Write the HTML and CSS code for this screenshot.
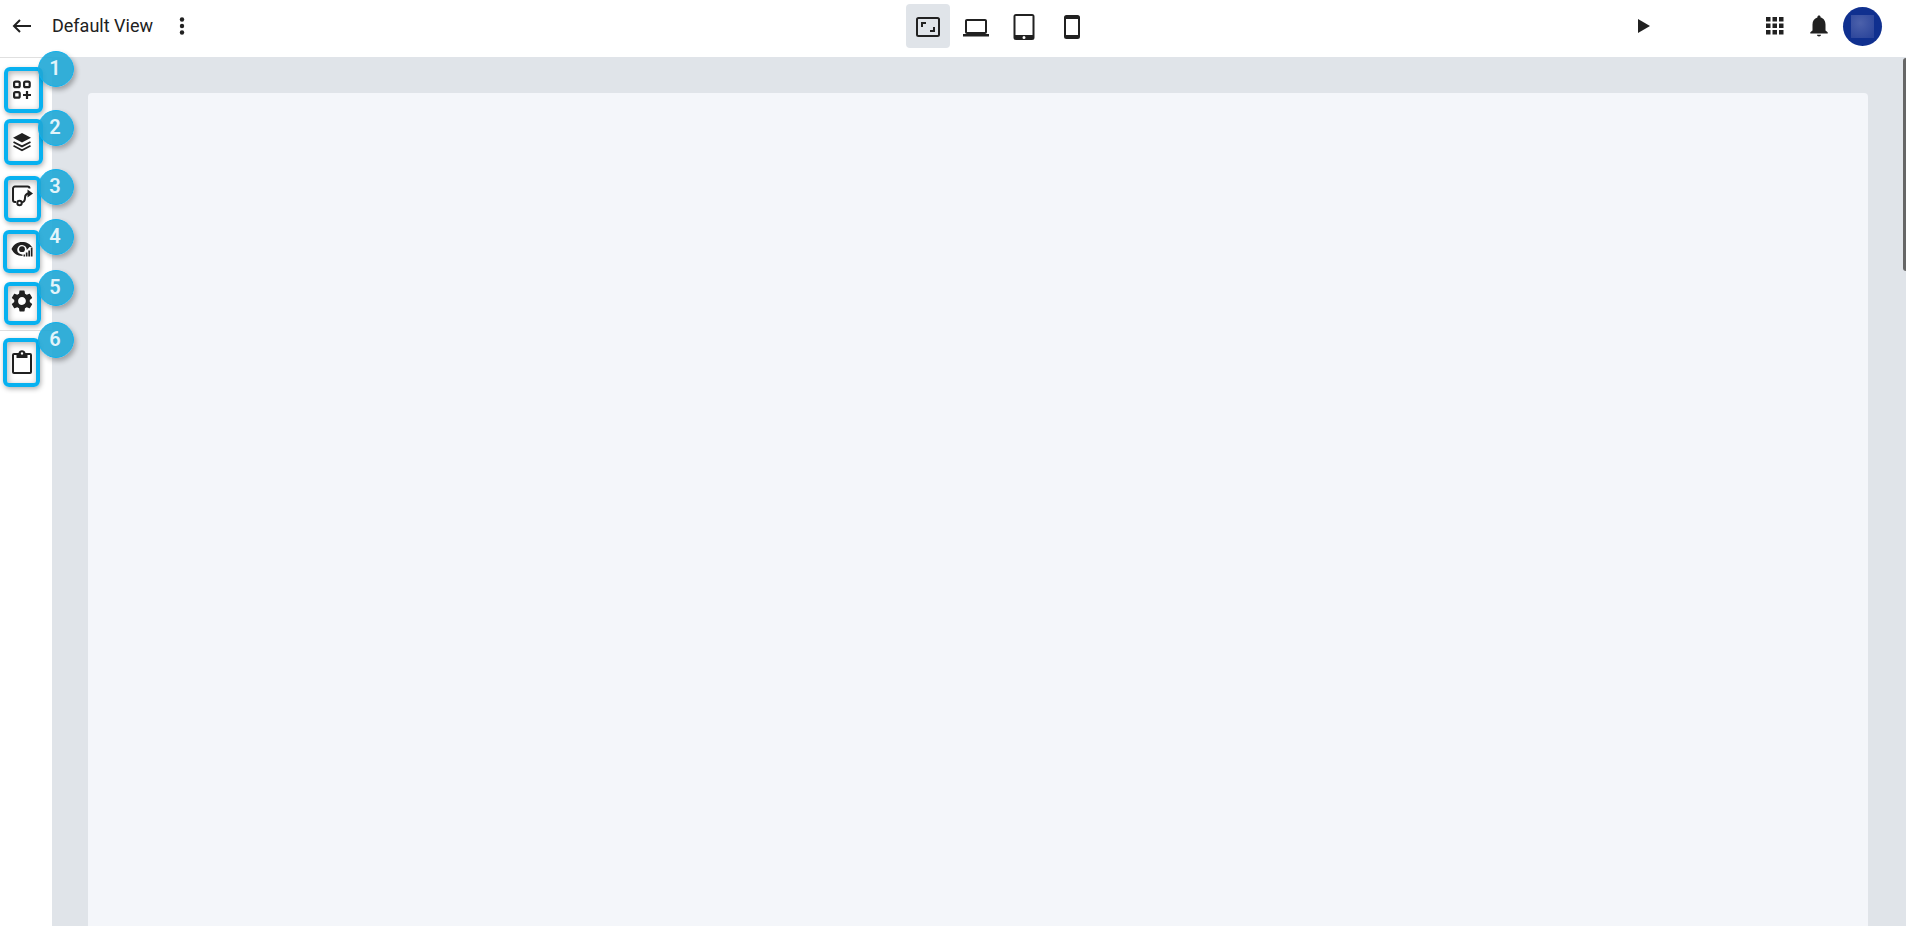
FILE: index.html
```html
<!DOCTYPE html>
<html lang="en">
<head>
    <meta charset="UTF-8">
    <meta name="viewport" content="width=device-width, initial-scale=1.0">
    <title>Default View</title>
    <link rel="stylesheet" href="styles.css">
</head>
<body>
<header class="topbar">
    <div class="topbar-left">
        <button type="button" class="icon-button back-button" aria-label="Back">
            <svg width="24" height="24" viewBox="0 0 24 24"><path d="M21 12H4M10 6l-6 6 6 6" fill="none" stroke="currentColor" stroke-width="2"/></svg>
        </button>
        <h1 class="view-name">Default View</h1>
        <button type="button" class="icon-button" aria-label="More options">
            <svg width="24" height="24" viewBox="0 0 24 24"><circle cx="12" cy="5.500" r="2.200"/><circle cx="12" cy="12" r="2.200"/><circle cx="12" cy="18.500" r="2.200"/></svg>
        </button>
    </div>

    <div class="devices">
        <button type="button" class="device-button active" aria-label="Fit to screen">
            <svg width="28" height="28" viewBox="0 -1 28 28"><rect x="3" y="5" width="22" height="18" rx="1.500" fill="none" stroke="currentColor" stroke-width="2"/><path d="M7 9h5v2H9v3H7zM21 19h-5v-2h3v-3h2z"/></svg>
        </button>
        <button type="button" class="device-button" aria-label="Laptop">
            <svg width="28" height="28" viewBox="0 -1 28 28"><path d="M23 21c1.200 0 2-.9 2-2V8c0-1.200-.8-2-2-2H5c-1.200 0-2 .8-2 2v11c0 1.100.8 2 2 2H1v2.500h26V21zM5 8h18v11H5z" fill-rule="evenodd"/></svg>
        </button>
        <button type="button" class="device-button" aria-label="Tablet">
            <svg width="28" height="28" viewBox="0 -1 28 28"><path d="M6 1h16a2.500 2.500 0 0 1 2.500 2.500v21A2.500 2.500 0 0 1 22 27H6a2.500 2.500 0 0 1-2.500-2.500v-21A2.500 2.500 0 0 1 6 1zM5.500 3v19h17V3zM14 23a1.500 1.500 0 1 0 0 3 1.500 1.500 0 0 0 0-3z" fill-rule="evenodd"/></svg>
        </button>
        <button type="button" class="device-button" aria-label="Phone">
            <svg width="28" height="28" viewBox="0 -1 28 28"><path d="M8.500 2h11A2.500 2.500 0 0 1 22 4.500v19a2.500 2.500 0 0 1-2.500 2.500h-11A2.500 2.500 0 0 1 6 23.500v-19A2.500 2.500 0 0 1 8.500 2zM8 6v16h12V6z" fill-rule="evenodd"/></svg>
        </button>
    </div>

    <div class="topbar-right">
        <button type="button" class="icon-button play-button" aria-label="Preview">
            <svg width="24" height="24" viewBox="0 0 24 24"><path d="M7 5l12 7-12 7z"/></svg>
        </button>
        <button type="button" class="icon-button" aria-label="Apps">
            <svg width="24" height="24" viewBox="0 0 24 24"><path d="M3 3h4.500v4.500H3zM9.500 3H14v4.500H9.500zM16 3h4.500v4.500H16zM3 9.500h4.500V14H3zM9.500 9.500H14V14H9.500zM16 9.500h4.500V14H16zM3 16h4.500v4.500H3zM9.500 16H14v4.500H9.500zM16 16h4.500v4.500H16z"/></svg>
        </button>
        <button type="button" class="icon-button" aria-label="Notifications">
            <svg width="24" height="24" viewBox="0 0 24 24"><path d="M12 22.500c1.200 0 2-.7 2-1.700h-4c0 1 .9 1.700 2 1.700zM18.500 16.500V10.500c0-3.400-1.800-6.200-4.900-6.900V3c0-.9-.7-1.600-1.600-1.600s-1.600.7-1.600 1.600v.6C7.300 4.300 5.500 7.100 5.500 10.500v6L3.300 18.300v1.200h17.400v-1.200z"/></svg>
        </button>
        <button type="button" class="avatar" aria-label="Account"><span class="avatar-image"></span></button>
    </div>
</header>

<div class="editor">
    <nav class="sidebar" aria-label="Editor tools">
        <ul class="tools">
            <li>
                <button type="button" class="tool-button" aria-label="Add component">
                    <svg width="24" height="24" viewBox="0 0 24 24"><g fill="none" stroke="currentColor" stroke-width="2.200"><rect x="4.100" y="4.600" width="5.600" height="5.600" rx="1.500"/><rect x="14.100" y="4.600" width="5.600" height="5.600" rx="1.500"/><rect x="4.100" y="15.100" width="5.600" height="5.600" rx="1.500"/><path d="M17 14v8M13 18h8"/></g></svg>
                </button>
            </li>
            <li>
                <button type="button" class="tool-button" aria-label="Layers">
                    <svg width="24" height="24" viewBox="0 0 24 24"><path d="M12 3l9 4.800-9 4.800-9-4.800z"/><path d="M3.500 12l8.500 4.400 8.500-4.400M3.500 15.800l8.500 4.400 8.500-4.400" fill="none" stroke="currentColor" stroke-width="1.800"/></svg>
                </button>
            </li>
            <li>
                <button type="button" class="tool-button" aria-label="Actions">
                    <svg width="24" height="24" viewBox="0 0 24 24"><g fill="none" stroke="currentColor" stroke-width="2"><path d="M6 19H5a2 2 0 0 1-2-2V5.500A2 2 0 0 1 5 3.500H17.500q2 0 2 2"/><circle cx="9.500" cy="20" r="2.200"/><path d="M11.500 19.500c3-.5 3.500-2 3.500-4.500s1-4.500 4-4.500"/></g><path d="M17.500 6.500l5.500 4-5.500 4z"/></svg>
                </button>
            </li>
            <li>
                <button type="button" class="tool-button" aria-label="Visibility and data">
                    <svg width="24" height="24" viewBox="0 0 24 24"><path d="M12 6c5 0 8 2 10 5h-2.500l-2.700 3a4.800 4.800 0 1 0-4.300 4.500v1.500C7.500 20 3.500 17.500 1.500 13 3.500 8.500 7.500 6 12 6z"/><circle cx="12" cy="13.200" r="2.900"/><path d="M13.500 18.500h1.500V20.500h-1.500zM15.800 16.500h1.700v4h-1.700zM18.300 14.500H20v6h-1.700zM20.800 11.500h1.700v9h-1.700z"/></svg>
                </button>
            </li>
            <li>
                <button type="button" class="tool-button" aria-label="Settings">
                    <svg width="26" height="26" viewBox="0 0 24 24"><path d="M19.140 12.940c.04-.3.060-.610.060-.94 0-.32-.02-.64-.070-.94l2.030-1.580a.49.49 0 0 0 .120-.610l-1.920-3.320a.488.488 0 0 0-.590-.220l-2.390.96c-.5-.380-1.030-.7-1.620-.940l-.360-2.540a.484.484 0 0 0-.480-.410h-3.840c-.240 0-.430.170-.470.410l-.360 2.540c-.590.240-1.130.570-1.620.940l-2.390-.960c-.220-.080-.470 0-.590.220L2.740 8.870c-.120.210-.080.470.120.610l2.030 1.580c-.050.300-.090.630-.090.940s.020.640.070.940l-2.030 1.580a.49.49 0 0 0-.120.610l1.920 3.320c.120.220.370.290.590.220l2.390-.960c.500.380 1.030.700 1.620.940l.360 2.540c.050.240.240.410.480.410h3.840c.240 0 .440-.170.470-.410l.360-2.540c.590-.240 1.130-.560 1.620-.940l2.390.960c.220.080.470 0 .590-.220l1.920-3.320c.120-.220.070-.470-.120-.610zM12 15.600A3.610 3.610 0 0 1 8.400 12c0-1.980 1.620-3.600 3.600-3.600s3.600 1.620 3.600 3.600-1.620 3.600-3.600 3.600z"/></svg>
                </button>
            </li>
        </ul>
        <div class="tools-footer">
            <button type="button" class="tool-button" aria-label="Clipboard">
                <svg width="26" height="26" viewBox="0 0 26 26"><path d="M5 4h4.500a3.600 3.600 0 0 1 7 0H21a2 2 0 0 1 2 2v17a2 2 0 0 1-2 2H5a2 2 0 0 1-2-2V6a2 2 0 0 1 2-2zM5 6v17h16V6h-2.500v3h-11V6zM13 3.200a1.200 1.200 0 1 0 0 2.400 1.200 1.200 0 0 0 0-2.400z" fill-rule="evenodd"/></svg>
            </button>
        </div>
    </nav>

    <main class="workspace">
        <div class="canvas"></div>
        <div class="scroll-thumb"></div>
    </main>

    <!-- numbered callouts over the tools -->
    <div class="callouts">
        <span class="frame frame-1"></span>
        <span class="frame frame-2"></span>
        <span class="frame frame-3"></span>
        <span class="frame frame-4"></span>
        <span class="frame frame-5"></span>
        <span class="frame frame-6"></span>
        <span class="badge badge-1">1</span>
        <span class="badge badge-2">2</span>
        <span class="badge badge-3">3</span>
        <span class="badge badge-4">4</span>
        <span class="badge badge-5">5</span>
        <span class="badge badge-6">6</span>
    </div>
</div>
</body>
</html>
```
FILE: styles.css
```css
* {
    box-sizing: border-box;
}

body {
    display: flex;
    flex-direction: column;
    height: 100vh;
    margin: 0;
    overflow: hidden;
    font-family: Roboto, "Liberation Sans", sans-serif;
    color: #212121;
    background-color: #fff;
}

button {
    display: flex;
    justify-content: center;
    align-items: center;
    padding: 0;
    border: none;
    background: none;
    color: inherit;
    cursor: pointer;
}

svg {
    display: block;
    fill: currentColor;
}

/* Top bar */
.topbar {
    display: flex;
    align-items: center;
    padding: 4px 24px 9px 10px;
}

.topbar-left,
.topbar-right {
    display: flex;
    flex: 1;
    align-items: center;
}

.topbar-left {
    margin-right: 108px;
}

.topbar-right {
    justify-content: flex-end;
    gap: 20px;
}

.icon-button {
    width: 24px;
    height: 24px;
}

.view-name {
    margin: 0 17px 0 18px;
    font-size: 18px;
    font-weight: 400;
    line-height: 24px;
}

.devices {
    display: flex;
    gap: 4px;
}

.device-button {
    width: 44px;
    height: 44px;
    border-radius: 4px;
}

.device-button.active {
    background-color: #e0e4e9;
}

.play-button {
    margin-right: 88px;
}

.avatar {
    width: 39px;
    height: 39px;
    margin-left: -8px;
    border-radius: 50%;
    background-color: #10308f;
}

.avatar-image {
    width: 23px;
    height: 23px;
    background: radial-gradient(circle at 40% 35%, #4c61ab, #2a449a 90%);
}

/* Editor */
.editor {
    position: relative;
    display: flex;
    flex: 1;
    min-height: 0;
}

.sidebar {
    width: 52px;
    border-top: 1px solid #e0e0e0;
}

.tools {
    margin: 0;
    padding: 4px 0 3px;
    list-style: none;
}

.tools-footer {
    padding-top: 4px;
    border-top: 1px solid #e0e0e0;
}

.tool-button {
    width: 44px;
    height: 53px;
}

.workspace {
    display: flex;
    flex: 1;
    justify-content: flex-end;
    background-color: #e0e4e9;
}

.canvas {
    flex: 1;
    margin: 36px 35px 0 36px;
    border-radius: 4px 4px 0 0;
    background-color: #f4f6fa;
}

.scroll-thumb {
    width: 3px;
    height: 213px;
    margin-top: 1px;
    border-radius: 3px 0 0 3px;
    background-color: #666;
}

/* Callouts */
.callouts {
    position: absolute;
    top: 0;
    left: 0;
    pointer-events: none;
}

.frame {
    position: absolute;
    left: 4px;
    width: 37px;
    height: 46px;
    border: 4px solid #08b1f0;
    border-radius: 6px;
    box-shadow: 1px 2px 5px rgba(0, 0, 0, 0.3), inset 1px 2px 6px rgba(0, 0, 0, 0.3);
}

.frame-1 { top: 10px; width: 39px; }
.frame-2 { top: 62px; width: 39px; }
.frame-3 { top: 119px; }
.frame-4 { top: 173px; left: 3px; height: 43px; }
.frame-5 { top: 225px; height: 43px; }
.frame-6 { top: 281px; left: 3px; height: 49px; }

.badge {
    position: absolute;
    left: 38px;
    width: 36px;
    height: 36px;
    padding-right: 2px;
    border: 1px solid #10b0ec;
    border-radius: 50%;
    background-color: rgba(31, 167, 214, 0.9);
    box-shadow: 2px 3px 5px rgba(0, 0, 0, 0.3);
    color: #e2f4fa;
    font-size: 20px;
    font-weight: 600;
    line-height: 32px;
    text-align: center;
}

.badge-1 { top: -6px; }
.badge-2 { top: 53px; }
.badge-3 { top: 112px; }
.badge-4 { top: 162px; }
.badge-5 { top: 213px; }
.badge-6 { top: 265px; }
```
